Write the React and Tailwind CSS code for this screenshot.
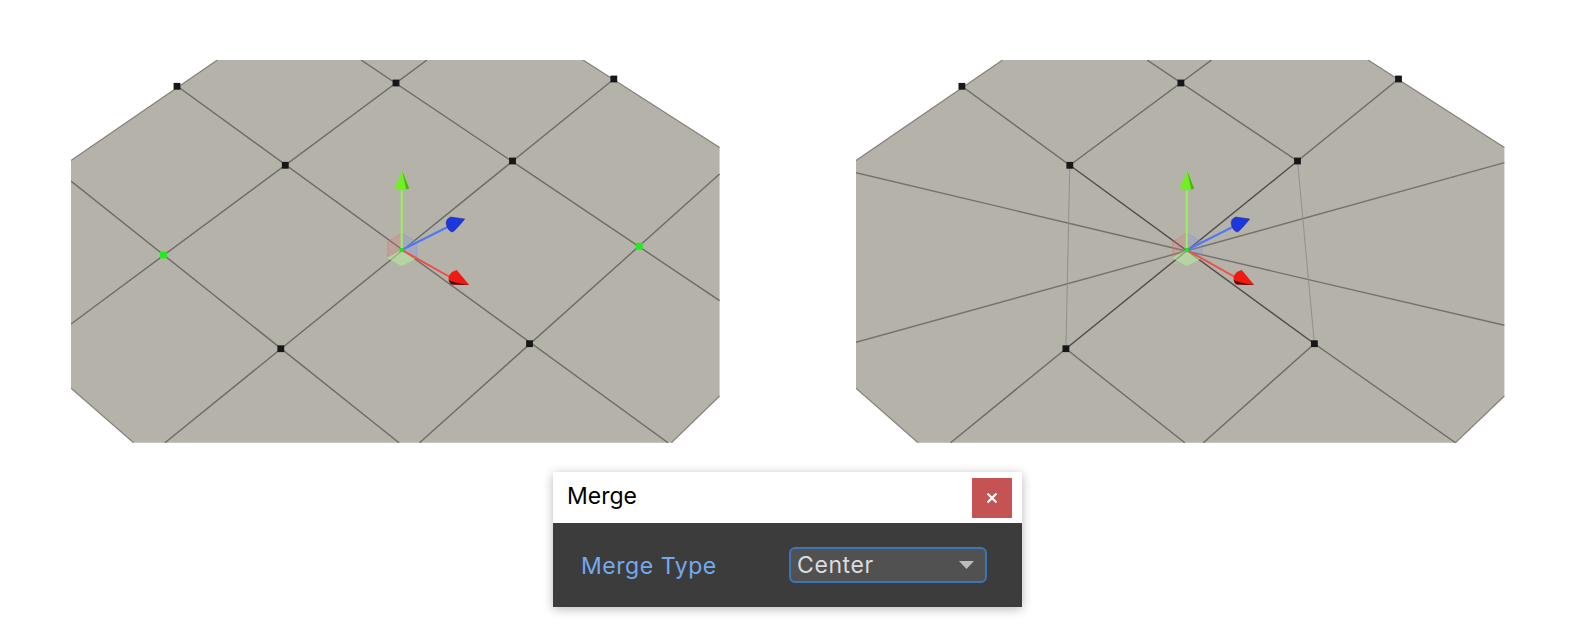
import React from "react";

const FILL = "#b5b2a9";
const EDGE = "#6c6b66";
const OUTLINE = "#83817b";

function Gizmo({ x, y }) {
  return (
    <g transform={`translate(${x} ${y})`}>
      <polygon points="0,0 0,-16.7 -14,-8.3 -14,7.7" fill="#e0726a" fillOpacity="0.25" stroke="#d9726a" strokeOpacity="0.55" strokeWidth="0.7" />
      <polygon points="0,0 0,-16.7 15,-8.3 15,7.7" fill="#7a8ff0" fillOpacity="0.25" stroke="#7c8ff0" strokeOpacity="0.55" strokeWidth="0.7" />
      <polygon points="0,0 15,7.7 0,15.7 -14,7.7" fill="#b4f0a0" fillOpacity="0.55" stroke="#a8ee90" strokeOpacity="0.7" strokeWidth="0.7" />
      <line x1="0" y1="0" x2="48" y2="-24" stroke="#4f78f6" strokeWidth="2" />
      <path d="M63,-31 L49,-33 Q44,-31 44.5,-26 Q46,-19 51,-18 Q55,-21 63,-31 Z" fill="#1c36e0" stroke="#1a2a80" strokeWidth="0.5" strokeLinejoin="round" />
      <line x1="0" y1="0" x2="50" y2="28" stroke="#ee4f42" strokeWidth="2" />
      <path d="M67.5,35 L55,20 Q48,22 47,27 Q46,32 50,34.5 Z" fill="#f01a12" />
      <path d="M67.5,35 L50,34.5 Q47.5,33 47,30 Q53,33 67.5,35 Z" fill="#4a0c0a" />
      <line x1="0" y1="0" x2="0" y2="-64" stroke="#9cf25e" strokeWidth="2" />
      <polygon points="0.5,-79 -7,-61.5 0,-59.5 7.5,-61.5" fill="#70f020" />
      <polygon points="0.5,-79 4.5,-60.5 7.5,-61.5" fill="#4fb01e" />
      <rect x="-2" y="-2" width="4" height="4" fill="#18e818" />
    </g>
  );
}

function Vertex({ x, y, color = "#171717" }) {
  return <rect x={x - 3.4} y={y - 3.4} width="6.8" height="6.8" fill={color} />;
}

function Edge({ p, color = EDGE, w = 1.4 }) {
  return <line x1={p[0]} y1={p[1]} x2={p[2]} y2={p[3]} stroke={color} strokeWidth={w} />;
}

function LeftMesh() {
  const lines = [
    [177, 86, 668, 442.7],
    [361, 60, 719.6, 300.7],
    [71, 181, 399, 442.7],
    [427, 60, 71, 324],
    [614, 79, 165, 442.7],
    [719.6, 174, 419.6, 442.7],
  ];
  return (
    <svg width="649" height="383" viewBox="71 60 649 383" className="block shrink-0">
      <polygon
        points="217.4,60 583,60 719.6,147.5 719.6,396 671.5,442.7 133.5,442.7 71,388.3 71,160.5"
        fill={FILL}
      />
      <polyline points="71,160.5 217.4,60" fill="none" stroke={OUTLINE} strokeWidth="1.2" />
      <polyline points="583,60 719.6,147.5" fill="none" stroke={OUTLINE} strokeWidth="1.2" />
      <polyline points="719.6,396 671.5,442.7" fill="none" stroke={OUTLINE} strokeWidth="1.2" />
      <polyline points="71,388.3 133.5,442.7" fill="none" stroke={OUTLINE} strokeWidth="1.2" />
      {lines.map((p, i) => <Edge key={i} p={p} />)}
      <Gizmo x={401.7} y={250} />
      <Vertex x={177} y={86.3} />
      <Vertex x={396} y={83} />
      <Vertex x={613.8} y={79} />
      <Vertex x={285.3} y={165.3} />
      <Vertex x={512.5} y={161} />
      <Vertex x={163.4} y={255} color="#1cf01c" />
      <Vertex x={639.3} y={246.3} color="#1cf01c" />
      <Vertex x={280.8} y={348.7} />
      <Vertex x={529.5} y={343.7} />
    </svg>
  );
}

function RightMesh() {
  const O = [1186, 251];
  const lines = [
    [1147, 60, 1297.5, 161],
    [1211.6, 60, 1069.8, 165.3],
    [961.9, 86.3, 1069.8, 165.3],
    [1398.5, 79, 1297.5, 161],
    [1065.9, 348.7, 950.6, 442.7],
    [1065.9, 348.7, 1184.8, 442.7],
    [1314.4, 343.7, 1203.4, 442.7],
    [1314.4, 343.7, 1455.5, 442.7],
  ];
  const spokes = [
    [856, 172.7],
    [1504.4, 162.7],
    [856, 342.3],
    [1504.4, 325.3],
  ];
  return (
    <svg width="649" height="383" viewBox="856 60 649 383" className="block shrink-0">
      <polygon
        points="1002.6,60 1368,60 1504.4,147.5 1504.4,396 1455.5,442.7 918,442.7 856,388.3 856,160.5"
        fill={FILL}
      />
      <polyline points="856,160.5 1002.6,60" fill="none" stroke={OUTLINE} strokeWidth="1.2" />
      <polyline points="1368,60 1504.4,147.5" fill="none" stroke={OUTLINE} strokeWidth="1.2" />
      <polyline points="1504.4,396 1455.5,442.7" fill="none" stroke={OUTLINE} strokeWidth="1.2" />
      <polyline points="856,388.3 918,442.7" fill="none" stroke={OUTLINE} strokeWidth="1.2" />
      {lines.map((p, i) => <Edge key={i} p={p} />)}
      {spokes.map((s, i) => <Edge key={i} p={[s[0], s[1], O[0], O[1]]} color="#73726d" w={1.4} />)}
      <Edge p={[1069.8, 165.3, 1065.9, 348.7]} color="#8d8b86" w={0.9} />
      <Edge p={[1297.5, 161, 1314.4, 343.7]} color="#8d8b86" w={0.9} />
      <Edge p={[1069.8, 165.3, 1314.4, 343.7]} color="#4d4c49" w={1.4} />
      <Edge p={[1297.5, 161, 1065.9, 348.7]} color="#4d4c49" w={1.4} />
      <Gizmo x={1186.7} y={250} />
      <Vertex x={961.9} y={86.3} />
      <Vertex x={1180.9} y={83} />
      <Vertex x={1398.5} y={79} />
      <Vertex x={1069.8} y={165.3} />
      <Vertex x={1297.5} y={161} />
      <Vertex x={1065.9} y={348.7} />
      <Vertex x={1314.4} y={343.7} />
    </svg>
  );
}

export default function App() {
  return (
    <div className="min-h-[640px] w-full bg-white pt-[60px] font-['Inter',sans-serif]">
      <div className="flex justify-center gap-[136px]">
        <LeftMesh />
        <RightMesh />
      </div>
      <div className="ml-[553px] mt-[29px] w-[469px] shadow-[0_2px_10px_rgba(0,0,0,0.28)]">
        <div className="flex h-[51px] items-center justify-between bg-white pl-[14px] pr-[10px]">
          <span className="-mt-0.5 text-[23px] leading-none text-black">Merge</span>
          <button className="flex h-10 w-10 items-center justify-center bg-[#c65353]">
            <svg width="12" height="12" viewBox="0 0 12 12">
              <path d="M1.5 1.5 L10.5 10.5 M10.5 1.5 L1.5 10.5" stroke="#ffffff" strokeWidth="2.2" />
            </svg>
          </button>
        </div>
        <div className="flex h-[84px] items-center bg-[#3c3c3c] pl-[28px]">
          <span className="mt-0.5 w-[208px] text-[23px] leading-none tracking-[0.55px] text-[#74a9ef]">Merge Type</span>
          <div className="flex h-[36px] w-[198px] items-center justify-between rounded-[6px] border-2 border-[#3a74b9] bg-[#515151] pl-[6px] pr-[11px]">
            <span className="text-[23px] leading-none tracking-[0.6px] text-[#dcdcdc]">Center</span>
            <svg width="15" height="8" viewBox="0 0 15 8">
              <polygon points="0,0 15,0 7.5,8" fill="#bcbcbc" />
            </svg>
          </div>
        </div>
      </div>
    </div>
  );
}
